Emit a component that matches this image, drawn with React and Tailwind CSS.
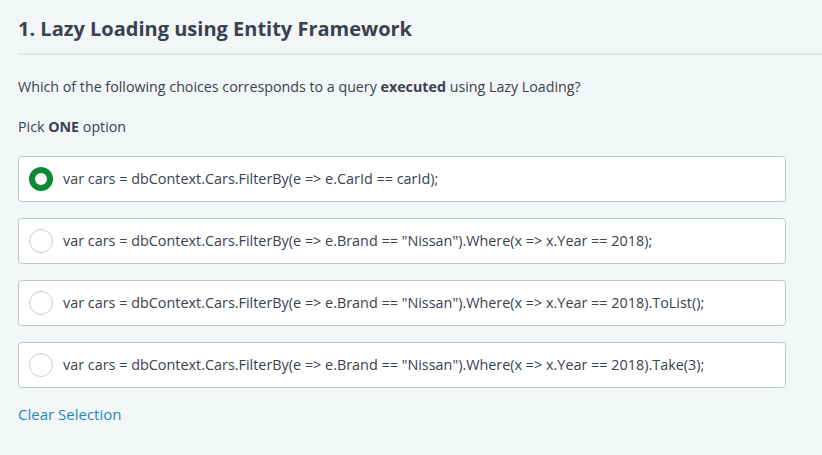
import React, { useState } from 'react';

const options = [
  'var cars = dbContext.Cars.FilterBy(e => e.CarId == carId);',
  'var cars = dbContext.Cars.FilterBy(e => e.Brand == "Nissan").Where(x => x.Year == 2018);',
  'var cars = dbContext.Cars.FilterBy(e => e.Brand == "Nissan").Where(x => x.Year == 2018).ToList();',
  'var cars = dbContext.Cars.FilterBy(e => e.Brand == "Nissan").Where(x => x.Year == 2018).Take(3);',
];

export default function App() {
  const [selected, setSelected] = useState(0);

  return (
    <div className="min-h-[455px] bg-[#f3f6f7] text-[#39424e] font-['Open_Sans',sans-serif] pl-[18px] pt-[14px]">
      <h1 className="text-[20px] font-bold leading-[30px] pb-[9px] border-b-2 border-[#e3e9ea]">
        1. Lazy Loading using Entity Framework
      </h1>

      <p className="text-[14.25px] leading-5 mt-[22px]">
        Which of the following choices corresponds to a query <b>executed</b> using Lazy Loading?
      </p>
      <p className="text-[14.25px] leading-5 mt-[20px]">
        Pick <b>ONE</b> option
      </p>

      <div className="flex flex-col gap-4 mt-[19px] w-[768px]">
        {options.map((text, i) => (
          <button
            key={i}
            onClick={() => setSelected(i)}
            className="flex items-center h-[46px] bg-white border border-[#b9c8ce] rounded-[4px] pl-[10px] text-left"
          >
            {selected === i ? (
              <span className="w-6 h-6 rounded-full border-[6px] border-[#0e8a37] bg-white shrink-0" />
            ) : (
              <span className="w-6 h-6 rounded-full border border-[#c3d0d4] bg-white shrink-0" />
            )}
            <span className="ml-[10px] text-[14.4px] text-[#39424e]">{text}</span>
          </button>
        ))}
      </div>

      <button
        onClick={() => setSelected(-1)}
        className="mt-4 text-[15px] text-[#1a8acb] leading-5"
      >
        Clear Selection
      </button>
    </div>
  );
}
